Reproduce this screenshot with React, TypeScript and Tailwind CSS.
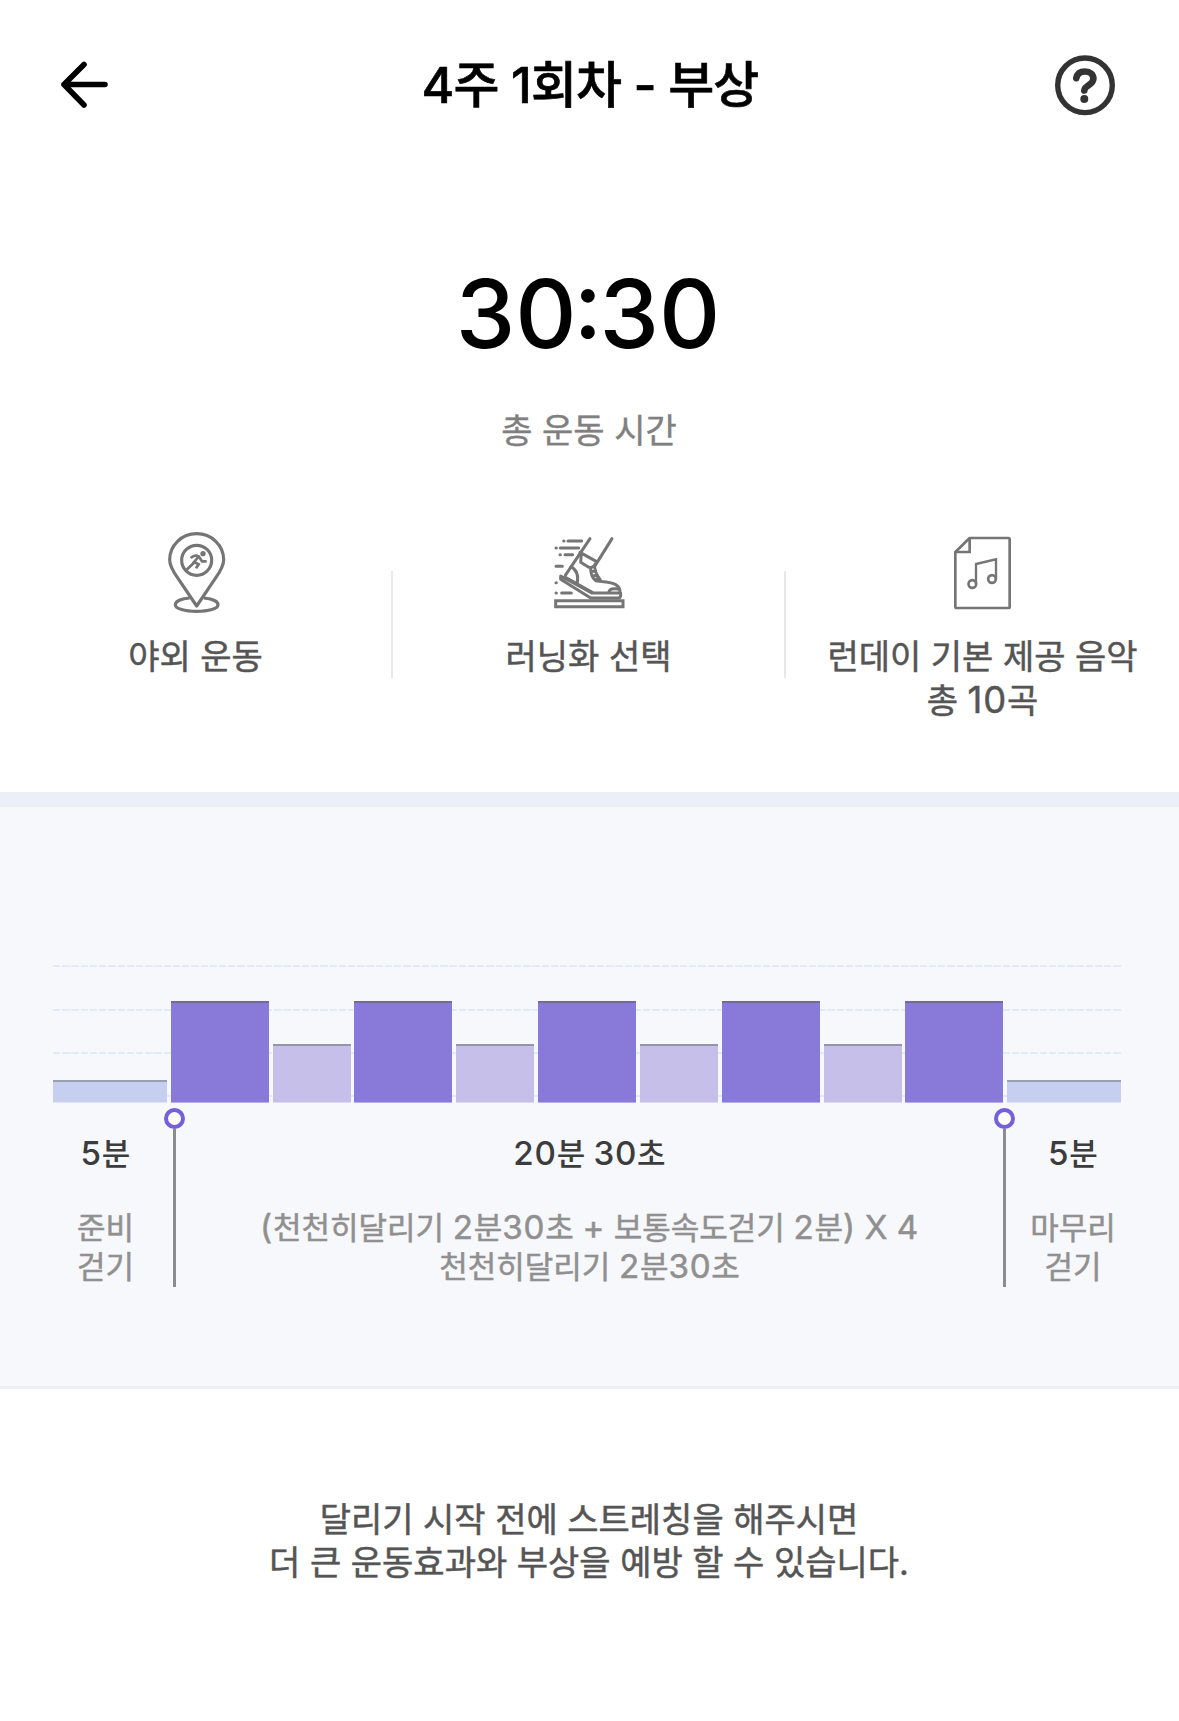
import { ReactNode } from "react";

type Segment = {
	kind: "walk" | "run" | "rest";
	gap: string;
};

const segments: Segment[] = [
	{ kind: "walk", gap: "mr-[4px]" },
	{ kind: "run", gap: "mr-[4px]" },
	{ kind: "rest", gap: "mr-[3px]" },
	{ kind: "run", gap: "mr-[4px]" },
	{ kind: "rest", gap: "mr-[4px]" },
	{ kind: "run", gap: "mr-[4px]" },
	{ kind: "rest", gap: "mr-[4px]" },
	{ kind: "run", gap: "mr-[4px]" },
	{ kind: "rest", gap: "mr-[3px]" },
	{ kind: "run", gap: "mr-[4px]" },
	{ kind: "walk", gap: "" },
];

const barStyles = {
	walk: "w-[114px] h-[23px] bg-[#c6cff0] border-t-[#999fb5] border-b-[#dfe4f7]",
	run: "w-[98px] h-[102px] bg-[#8979d8] border-t-[#74699f] border-b-[#b9b0e8]",
	rest: "w-[78px] h-[59px] bg-[#c6bfe9] border-t-[#9893ae] border-b-[#dfdbf3]",
};

function BackIcon() {
	return (
		<svg className="ml-[1px] h-[48px] w-[50px]" viewBox="0 0 50 48" fill="none" stroke="#000" strokeWidth="5.6" strokeLinecap="round" strokeLinejoin="round">
			<path d="M24 3.500 4 23.500l20 20.500M4 23.500h41" />
		</svg>
	);
}

function HelpIcon() {
	return (
		<svg className="size-[62px]" viewBox="0 0 62 62" fill="none" stroke="#333">
			<circle cx="31" cy="31.300" r="27.300" strokeWidth="5.400" />
			<path d="M22.300 24.200c.8-4.300 4-6.700 8.700-6.700 5 0 8.400 2.800 8.400 7.300 0 6.200-9 6.500-9.100 11.700" strokeWidth="6.600" strokeLinecap="round" />
			<circle cx="30.300" cy="45" r="4" fill="#333" stroke="none" />
		</svg>
	);
}

function PinIcon() {
	return (
		<svg className="ml-[4px] h-[105px] w-[95px]" viewBox="0 0 285 315" fill="none" stroke="#757575" strokeWidth="9.500">
			<path d="M140 258 82 172C68 152 59 137 59 119a81 78 0 0 1 162 0c0 18-9 33-23 53Z" strokeLinejoin="round" />
			<path d="M119 234c-24 2-43 9-43 20 0 12 28 20 64 20s64-8 64-20c0-11-19-18-43-20" />
			<circle cx="140" cy="121" r="45" />
			<circle cx="159" cy="101" r="8" fill="#757575" stroke="none" />
			<path d="M122 114q12-11 24-5l10 15h14M145 111l-13 15 14 7-8 12M131 129l-21 20" strokeWidth="8" />
		</svg>
	);
}

function ShoeIcon() {
	return (
		<svg className="mr-[2px] h-[105px] w-[95px]" viewBox="0 0 285 315" fill="none" stroke="#757575" strokeWidth="9" strokeLinecap="round" strokeLinejoin="round">
			<path d="M47 242h202v18H47Z" strokeLinejoin="miter" />
			<path d="M71 63h1M84 63h41M48 84h1M61 84h55M60 104h1M75 104h23M48 139h19M48 188h1M48 219h1M65 219h29" />
			<path d="M150 56 76 166M216 56 164 139" />
			<path d="M120 97l50 28-7 12c-5 4-12 8-18 4l-23-14 2-28" />
			<path d="M62 168l93 51h87v6c0 6-3 9-8 9h-82l-90-56ZM76 172l82 46" />
			<path d="M93 140c17 9 24 29 18 51" />
			<path d="M152 144c0 18 6 31 14 37 10 5 37 1 60 12 9 5 14 14 14 23M164 141c1 14 8 27 17 39M155 155l12-3M160 168l12-3M168 178l9-5" />
			<path d="M235 207c-17-3-27 0-28 10" />
		</svg>
	);
}

function MusicIcon() {
	return (
		<svg className="h-[105px] w-[95px]" viewBox="0 0 285 315" fill="none" stroke="#757575" strokeWidth="8">
			<path d="M104 54h116q4 0 4 4v202q0 4-4 4H65q-4 0-4-4V96Z" strokeLinejoin="round" />
			<path d="M104 55v41H62" />
			<path d="M123 192v-60l60-14v60" strokeWidth="7" />
			<circle cx="112" cy="192" r="11.500" />
			<circle cx="171" cy="177" r="11.500" />
		</svg>
	);
}

// Latin digits run a little larger than the hangul beside them
function Mixed({ text }: { text: string }) {
	return text.split(/([0-9()+X]+)/).map((part, index) =>
		index % 2 ? <span key={index} className="text-[1.07em] tracking-[0.022em]">{part}</span> : part
	);
}

function Option({ icon, className, lines }: { icon: ReactNode; className: string; lines: string[] }) {
	return (
		<button className={`flex flex-col items-center ${className}`}>
			{icon}
			<span className="mt-[10px] whitespace-nowrap text-[34px] leading-[43.500px] text-[#555] [-webkit-text-stroke:0.5px_#555]">
				{lines.map((line) => (
					<span key={line} className="block h-[43.500px]"><Mixed text={line} /></span>
				))}
			</span>
		</button>
	);
}

function Divider() {
	return <div className="mt-[51px] h-[107px] w-[2px] bg-[#e8e8e8]" />;
}

function Marker() {
	return (
		<div className="flex w-[21px] shrink-0 flex-col items-center">
			<div className="size-[21px] rounded-full border-[4px] border-[#7560d9] bg-white" />
			<div className="h-[158px] w-[3px] bg-[#8c8c8c]" />
		</div>
	);
}

function GridLine({ className }: { className?: string }) {
	return <div className={`h-[2px] bg-[repeating-linear-gradient(90deg,#e1ebf3_0_7.3px,transparent_7.3px_9.22px)] ${className ?? ""}`} />;
}

function Stage({ time, className, lines }: { time: string; className: string; lines: string[] }) {
	return (
		<div className={`flex shrink-0 flex-col items-center whitespace-nowrap pt-[25px] text-center ${className}`}>
			<p className="h-[40px] text-[31px] font-medium leading-[40px] text-[#3c3c3c]"><Mixed text={time} /></p>
			<div className="mt-[35px] text-[31px] leading-[39px] text-[#909090] [-webkit-text-stroke:0.5px_#909090]">
				{lines.map((line) => (
					<p key={line} className="h-[39px]"><Mixed text={line} /></p>
				))}
			</div>
		</div>
	);
}

export default function App() {
	return (
		<main className="flex h-[1721px] w-[1179px] flex-col overflow-hidden bg-white font-['Inter','Noto_Sans_CJK_KR',sans-serif]">
			<header className="flex h-[170px] items-center justify-between pl-[59px] pr-[63px]">
				<button className="w-[67px]" aria-label="뒤로"><BackIcon /></button>
				<h1 className="text-[50px] font-medium leading-[60px] tracking-[-0.9px] text-black [-webkit-text-stroke:0.6px_#000]">4주 1회차 - 부상</h1>
				<button aria-label="도움말"><HelpIcon /></button>
			</header>

			<section className="flex h-[622px] flex-col items-center">
				<p className="mt-[84px] mr-[3px] text-[95px] font-medium leading-[120px] text-black">
					30<span className="relative -top-[10px] -mx-[3px]">:</span>30
				</p>
				<p className="mt-[35px] mr-[1px] text-[34px] leading-[44px] text-[#808080] [-webkit-text-stroke:0.4px_#808080]">총 운동 시간</p>
				<div className="mt-[67px] flex w-full items-start">
					<Option className="w-[391px]" icon={<PinIcon />} lines={["야외 운동"]} />
					<Divider />
					<Option className="w-[391px]" icon={<ShoeIcon />} lines={["러닝화 선택"]} />
					<Divider />
					<Option className="w-[393px]" icon={<MusicIcon />} lines={["런데이 기본 제공 음악", "총 10곡"]} />
				</div>
			</section>

			<section className="h-[597px] border-t-[15px] border-b-[3px] border-t-[#ebeff7] border-b-[#eceff6] bg-[#f7f8fc]">
				<div className="mx-[53px] mt-[158px] grid">
					<div className="col-start-1 row-start-1 mr-[5px] flex flex-col gap-[41px]">
						<GridLine className="mb-[1px]" />
						<GridLine />
						<GridLine />
						<GridLine />
					</div>
					<div className="col-start-1 row-start-1 flex h-[138px] items-end">
						{segments.map((segment, index) => (
							<div key={index} className={`shrink-0 border-t-2 border-b ${barStyles[segment.kind]} ${segment.gap}`} />
						))}
					</div>
				</div>

				<div className="ml-[53px] mt-[5px] flex">
					<Stage time="5분" className="mr-[6px] w-[105px]" lines={["준비", "걷기"]} />
					<Marker />
					<Stage
						time="20분 30초"
						className="w-[809px]"
						lines={["(천천히달리기 2분30초 + 보통속도걷기 2분) X 4", "천천히달리기 2분30초"]}
					/>
					<Marker />
					<Stage time="5분" className="w-[116px]" lines={["마무리", "걷기"]} />
				</div>
			</section>

			<p className="mt-[110px] mr-[1px] text-center text-[34px] leading-[42.500px] text-[#555] [-webkit-text-stroke:0.5px_#555]">
				달리기 시작 전에 스트레칭을 해주시면<br />더 큰 운동효과와 부상을 예방 할 수 있습니다.
			</p>
		</main>
	);
}
